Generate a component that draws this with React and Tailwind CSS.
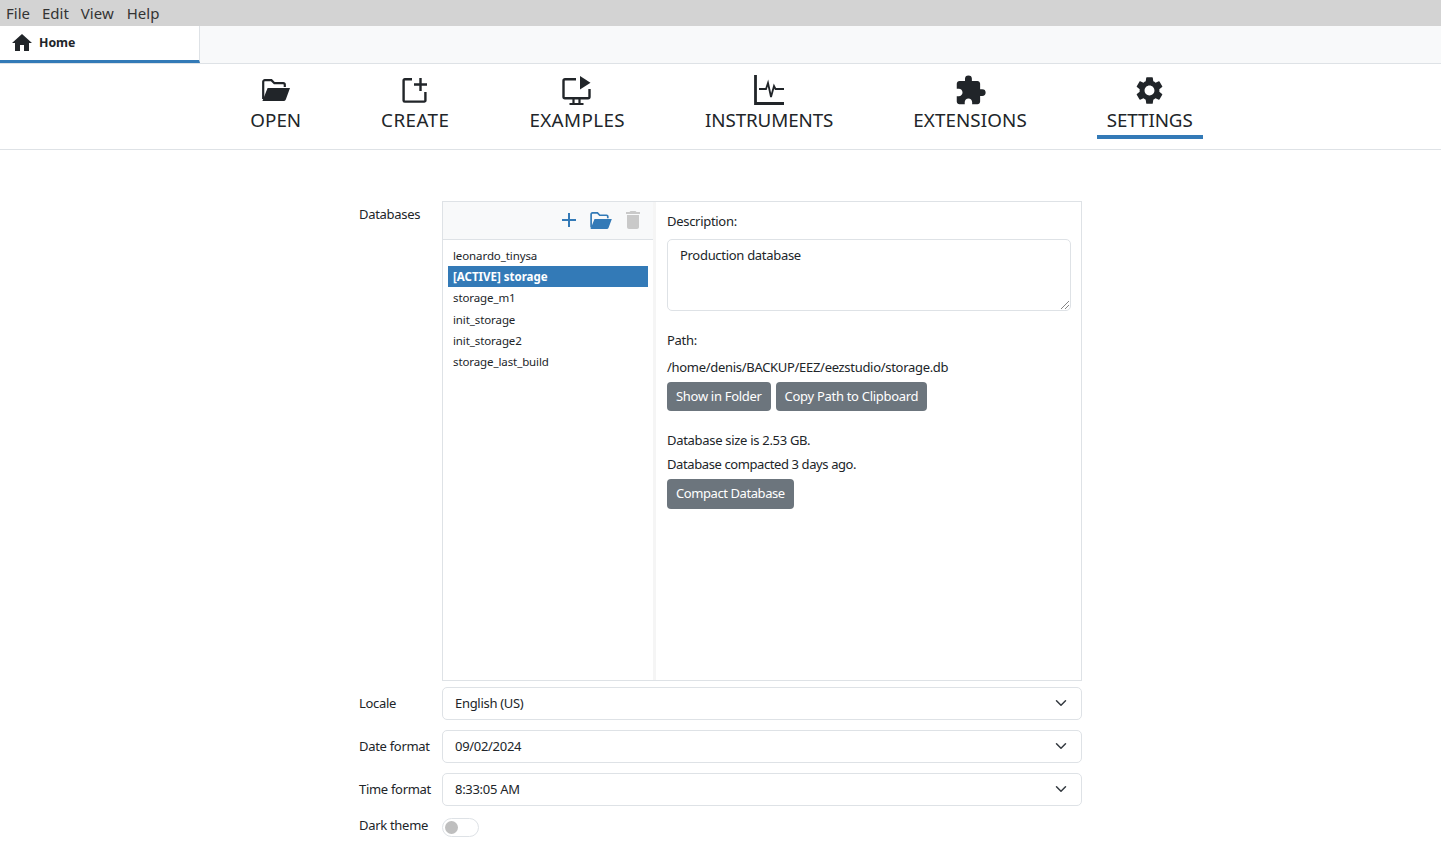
import React from "react";
import { MdHome, MdExtension, MdSettings, MdDelete, MdAdd } from "react-icons/md";

const font = "font-['Noto_Sans','Liberation_Sans',sans-serif]";

function FolderIcon({ color, width, height }) {
  return (
    <svg width={width} height={height} viewBox="0 0 28 22" fill="none">
      <path d="M1.2 20V2.8A1.6 1.6 0 0 1 2.8 1.2h6.6l3 3h8.8a1.6 1.6 0 0 1 1.6 1.6V8" stroke={color} strokeWidth="2.2" />
      <path d="M0.4 22L5.6 9h22.4l-4.2 11.4a2.4 2.4 0 0 1-2.2 1.6z" fill={color} />
    </svg>
  );
}
function CreateIcon() {
  return (
    <svg width="26" height="26" viewBox="0 0 26 26" fill="none" stroke="#212529" strokeWidth="2.4">
      <path d="M10 2.2H2.8a1.2 1.2 0 0 0-1.2 1.2v20a1.2 1.2 0 0 0 1.2 1.2h19.4a1.2 1.2 0 0 0 1.2-1.2V15" />
      <path d="M12 7.5h13M18.5 1v13" />
    </svg>
  );
}
function ExamplesIcon() {
  return (
    <svg width="30" height="29" viewBox="0 0 30 29" fill="none">
      <path d="M14 3.2H3a1.5 1.5 0 0 0-1.5 1.5v16a1.5 1.5 0 0 0 1.5 1.5h23a1.5 1.5 0 0 0 1.5-1.5V13" stroke="#212529" strokeWidth="2.4" />
      <path d="M18 0l10.5 6.8L18 13.6z" fill="#212529" />
      <path d="M11.5 22v5.5M17.5 22v5.5M7.5 28h14" stroke="#212529" strokeWidth="2.2" />
    </svg>
  );
}
function InstrumentsIcon() {
  return (
    <svg width="30" height="30" viewBox="0 0 30 30" fill="none" stroke="#212529">
      <path d="M1.5 0v28.5H30" strokeWidth="2.8" />
      <path d="M5 14h7l2-6 3 14 3-11 1.5 3h8.5" strokeWidth="1.8" />
    </svg>
  );
}

const nav = [
  ["OPEN", <FolderIcon color="#212529" width={28} height={22} />, ""],
  ["CREATE", <CreateIcon />, "tracking-[0.45px]"],
  ["EXAMPLES", <ExamplesIcon />, "tracking-[0.4px]"],
  ["INSTRUMENTS", <InstrumentsIcon />, "tracking-[-0.1px]"],
  ["EXTENSIONS", <MdExtension size={33} color="#212529" />, "tracking-[0.1px]"],
  ["SETTINGS", <MdSettings size={33} color="#212529" />, "tracking-[-0.1px]"],
];

function Select({ value }) {
  return (
    <div className="h-[33px] flex items-center justify-between border border-[#dee2e6] rounded-[5px] pl-3 pr-[14px] bg-white">
      <span>{value}</span>
      <svg width="12" height="12" viewBox="0 0 16 16" fill="none" stroke="#343a40" strokeWidth="2" strokeLinecap="round" strokeLinejoin="round" className="-mt-[1px]"><path d="m2 5 6 6 6-6" /></svg>
    </div>
  );
}

function Btn({ children, tall, tight }) {
  return (
    <div className={`${tall ? "h-[30px]" : "h-[29px]"} ${tight ? "tracking-[-0.42px]" : ""} px-[9px] flex items-center rounded-[4px] bg-[#6c757d] text-white`}>{children}</div>
  );
}

const dbs = ["leonardo_tinysa", "[ACTIVE] storage", "storage_m1", "init_storage", "init_storage2", "storage_last_build"];

export default function App() {
  return (
    <div className={`${font} w-[1441px] h-[851px] overflow-hidden bg-white text-[#212529] flex flex-col`}>
      <div className="h-[26px] bg-[#d3d3d3] flex items-center pl-[6px] gap-[12px] text-[15px] text-[#333]">
        <span>File</span><span>Edit</span><span>View</span><span className="ml-[1px]">Help</span>
      </div>
      <div className="h-[38px] bg-[#f8f9fa] border-b border-[#dee2e6] flex">
        <div className="w-[200px] h-[37px] bg-white border-r border-[#dee2e6] border-b-[3px] border-b-[#337ab7] flex items-center pl-[10px] gap-[5px]">
          <MdHome size={24} color="#212529" />
          <span className="text-[12.3px] font-bold">Home</span>
        </div>
      </div>
      <div className="h-[86px] border-b border-[#dee2e6] flex justify-center gap-[60px] pl-[2px]">
        {nav.map(([label, icon, track]) => (
          <div key={label} className={`flex flex-col items-center px-[10px] h-[75px] ${label === "SETTINGS" ? "border-b-4 border-[#337ab7]" : ""}`}>
            <div className="h-[36px] mt-[8px] flex items-center justify-center">{icon}</div>
            <div className={`text-[18.8px] leading-[24px] ${track}`}>{label}</div>
          </div>
        ))}
      </div>
      <div className="pt-[51px] pl-[359px] grid grid-cols-[83px_640px] text-[13px] tracking-[-0.3px]">
        <div className="pt-[4px]">Databases</div>
        <div className="h-[480px] border border-[#dee2e6] flex">
          <div className="w-[210px] flex flex-col">
            <div className="h-[38px] shrink-0 bg-[#f8f9fa] border-b border-[#dee2e6] flex items-center justify-end pr-[8px] pb-[1px] gap-[9px]">
              <MdAdd size={24} color="#337ab7" />
              <FolderIcon color="#337ab7" width={22} height={17} />
              <MdDelete size={24} color="#c9c9c9" />
            </div>
            <div className="pt-[5px] pl-[5px] pr-[5px] text-[11.5px] tracking-[-0.1px]">
              {dbs.map((d) => (
                <div key={d} className={`h-[21.2px] flex items-center pl-[5px] ${d.startsWith("[") ? "bg-[#337ab7] text-white font-bold tracking-[0px]" : ""}`}>{d}</div>
              ))}
            </div>
          </div>
          <div className="w-[3px] bg-[#f5f5f5]" />
          <div className="flex-1 pl-[11px] pr-[10px] flex flex-col">
            <div className="mt-[9px] leading-[20px]">Description:</div>
            <div className="relative mt-[8px] h-[72px] border border-[#dee2e6] rounded-[5px] pl-3 pt-[5px] leading-[20px]">
              Production database
              <svg className="absolute right-[1px] bottom-[1px]" width="8" height="8" viewBox="0 0 8 8" stroke="#666" strokeWidth="0.8"><path d="M0 8L8 0M4 8l4-4" /></svg>
            </div>
            <div className="mt-[19px] leading-[20px]">Path:</div>
            <div className="mt-[7px] leading-[20px]">/home/denis/BACKUP/EEZ/eezstudio/storage.db</div>
            <div className="mt-[5px] flex gap-[5px]"><Btn>Show in Folder</Btn><Btn>Copy Path to Clipboard</Btn></div>
            <div className="mt-[19px] leading-[20px]">Database size is 2.53 GB.</div>
            <div className="mt-[4px] leading-[20px] tracking-[-0.4px]">Database compacted 3 days ago.</div>
            <div className="mt-[5px] flex"><Btn tall tight>Compact Database</Btn></div>
          </div>
        </div>
        <div className="pt-[6px] mt-[6px] leading-[20px]">Locale</div>
        <div className="mt-[6px]"><Select value="English (US)" /></div>
        <div className="pt-[6px] mt-[10px] leading-[20px]">Date format</div>
        <div className="mt-[10px]"><Select value="09/02/2024" /></div>
        <div className="pt-[6px] mt-[10px] leading-[20px]">Time format</div>
        <div className="mt-[10px]"><Select value="8:33:05 AM" /></div>
        <div className="mt-[9px] leading-[20px]">Dark theme</div>
        <div className="mt-[12px]">
          <div className="w-[37px] h-[19px] border border-[#dee2e6] rounded-full flex items-center pl-[2px]">
            <div className="w-[13px] h-[13px] rounded-full bg-[#bfbfbf]" />
          </div>
        </div>
      </div>
    </div>
  );
}
